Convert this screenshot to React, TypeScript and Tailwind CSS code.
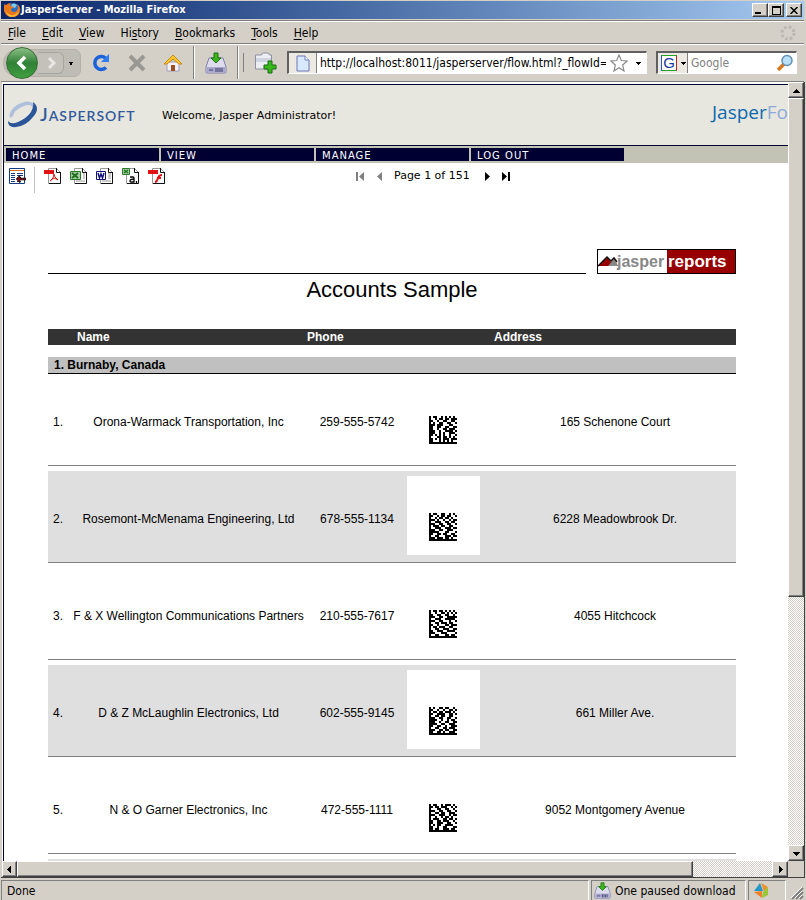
import React from "react";

const UI = "font-['DejaVu_Sans_Condensed','DejaVu_Sans',sans-serif]";
const RAISED = "border border-t-white border-l-white border-r-[#404040] border-b-[#404040] bg-[#d4d0c8] shadow-[inset_-1px_-1px_0_#808080]";
const TRACK = "bg-[repeating-conic-gradient(#fff_0_25%,#d4d0c8_0_50%)] bg-[length:2px_2px]";

const codes = [
  ["10110010101010","10010110110111","11001001100110","10100110011001","11101110001100","11001100110011","11001001101110","11100100111101","11100101001110","11010101001001","10001101101010","11010101110111","11000101010100","11111111111111"],
  ["10110011001010","11001011011001","10010110110100","11101001001011","10011100110110","11100110011001","10111011001100","10011100111011","11100110011100","11111000110001","11001101100110","10011000111011","11101110110100","11111111111111"],
  ["10110110101010","10010011010101","11001100110010","11100110011111","10011100111110","11100110001001","10011011101100","11001000110111","10110111001100","10011001110011","11001110011110","11100011100001","10011000110110","11111111111111"],
  ["10100110110010","11001001001101","10110110111010","11001111001101","10011011001100","11100110011001","11110010010110","11100100110011","11110011001110","11001100100111","10011001101110","11100110110011","11001101001110","11111111111111"],
  ["10110010111010","11011011100101","10001100110010","11100110011001","10011011001110","11100111001011","10010010110100","10111001101101","11001101110010","11001110011001","10101100111100","11001001100011","11011001110110","11111111111111"],
];

const rows = [
  ["Orona-Warmack Transportation, Inc", "259-555-5742", "165 Schenone Court"],
  ["Rosemont-McMenama Engineering, Ltd", "678-555-1134", "6228 Meadowbrook Dr."],
  ["F & X Wellington Communications Partners", "210-555-7617", "4055 Hitchcock"],
  ["D & Z McLaughlin Electronics, Ltd", "602-555-9145", "661 Miller Ave."],
  ["N & O Garner Electronics, Inc", "472-555-1111", "9052 Montgomery Avenue"],
];

function Matrix({ code }: { code: string[] }) {
  return (
    <svg width="28" height="28" viewBox="0 0 14 14" shapeRendering="crispEdges" aria-hidden="true">
      {code.flatMap((line, y) =>
        line.split("").map((c, x) => (c === "1" ? <rect key={`${x}-${y}`} x={x} y={y} width="1" height="1" /> : null)),
      )}
    </svg>
  );
}

function Firefox() {
  return (
    <svg width="18" height="16" viewBox="0 0 18 16" aria-hidden="true">
      <circle cx="10" cy="7" r="6" fill="#2a6fc0" />
      <path d="M8 3q3-3 6 0l-2 3-3-1z" fill="#7cc8f0" />
      <path d="M1 2q1 1 2 1Q5 1 8 1 6 3 8 4l3 1-3 2q0 3 3 3 3 0 4-4l-1-4q4 3 3 7-1 6-8 6-6 0-8-6Q1 5 1 2z" fill="#e8771a" />
      <path d="M2 5q0 6 6 8 5 1 8-5-1 7-7 7-6 0-7-10z" fill="#f8b838" />
    </svg>
  );
}

function Download({ size }: { size: number }) {
  return (
    <svg width={size} height={size} viewBox="0 0 22 22" aria-hidden="true">
      <path d="M4 6h14l3 9v5q0 1-1 1H2q-1 0-1-1v-5z" fill="#dcdcee" stroke="#8080a8" />
      <path d="M2 15h18v5H2z" fill="#a8a8cc" />
      <path d="M11 16v4M13 16v4M15 16v4M17 16v4M4 18h4" stroke="#404070" />
      <path d="M9 1h4v5h3l-5 5-5-5h3z" fill="#3cb819" stroke="#1b7010" />
    </svg>
  );
}

function Tri({ dir, className }: { dir: "up" | "down" | "left" | "right"; className?: string }) {
  const d = { up: "M0 6h7L3.500 2z", down: "M0 2h7L3.500 6z", left: "M5 0v7L1 3.500z", right: "M2 0v7l4-3.500z" }[dir];
  return (
    <svg width="7" height="7" viewBox="0 0 7 7" fill="currentColor" shapeRendering="crispEdges" className={className} aria-hidden="true">
      <path d={d} />
    </svg>
  );
}

function DocIcon({ kind }: { kind: string }) {
  return (
    <svg width="18" height="18" viewBox="0 0 18 18" aria-hidden="true">
      <path d="M4.500 1.500h8l4 4v11h-12z" fill="#fff" stroke="#999" />
      <path d="M16.500 5v11.500H5M12.500 1v4.500h4" fill="none" stroke="#111" />
      {(kind === "pdf" || kind === "swf") && <path d="M0 3h10v4H0z" fill="#e01414" />}
      {kind === "pdf" && <path d="M6 14l3-3 1-4 1 3 3 3-4-2-4 3" fill="none" stroke="#d02020" />}
      {kind === "swf" && <path d="M7 15q2 0 3-4 1-3 4-3M9 11h4" fill="none" stroke="#e01414" strokeWidth="2" />}
      {kind === "xls" && (
        <>
          <path d="M13 7h2M13 9h2M13 11h2M6 14h9" stroke="#999" />
          <path d="M.5 4.500h10v8H.5z" fill="#a8cca4" stroke="#287828" />
          <path d="M2 6l6 5M8 6l-6 5" stroke="#207020" strokeWidth="2" />
        </>
      )}
      {kind === "doc" && (
        <>
          <path d="M12 7h3M12 9h3M12 11h3M6 14h9" stroke="#999" />
          <path d="M.5 4.500h9v8h-9z" fill="#fff" stroke="#14147c" />
          <path d="M2 6l1.500 5L5 7l1.500 4L8 6" fill="none" stroke="#14147c" strokeWidth="1.500" />
        </>
      )}
      {kind === "csv" && (
        <>
          <path d="M.5 1.500h7v6h-7z" fill="#a8cca4" stroke="#287828" />
          <path d="M2 3l4 3M6 3L2 6" stroke="#207020" strokeWidth="1.500" />
          <path d="M8 10h3q1 0 1 1v4H9q-1 0-1-1 0-2 4-2M14.500 14v2" fill="none" stroke="#000" strokeWidth="1.300" />
        </>
      )}
    </svg>
  );
}

function TitleBar() {
  return (
    <header className="mt-px mr-[2px] flex h-[18px] shrink-0 items-center bg-linear-to-r from-[#0a246a] to-[#a6caf0] pl-[2px] text-white">
      <Firefox />
      <h1 className="grow text-[11px] leading-4 font-bold">JasperServer - Mozilla Firefox</h1>
      <div className="flex pr-[2px] text-black">
        <button aria-label="Minimize" className={`flex h-[14px] w-4 items-end justify-center pb-[2px] ${RAISED}`}>
          <span className="mr-1 h-[2px] w-[6px] bg-black" />
        </button>
        <button aria-label="Maximize" className={`flex h-[14px] w-4 items-center justify-center ${RAISED}`}>
          <span className="h-[9px] w-[9px] border border-t-2 border-black" />
        </button>
        <button aria-label="Close" className={`ml-[2px] flex h-[14px] w-4 items-center justify-center ${RAISED}`}>
          <svg width="8" height="7" viewBox="0 0 8 7"><path d="M.5 0l7 7M7.500 0l-7 7" stroke="#000" strokeWidth="1.500" /></svg>
        </button>
      </div>
    </header>
  );
}

function MenuBar() {
  const items = [["", "F", "ile"], ["", "E", "dit"], ["", "V", "iew"], ["Hi", "s", "tory"], ["", "B", "ookmarks"], ["", "T", "ools"], ["", "H", "elp"]];
  return (
    <nav className="mt-[2px] mr-[2px] flex h-[23px] shrink-0 items-center justify-between border-t border-b border-t-white border-b-[#808080] pr-2 pl-[7px] shadow-[0_-1px_0_#808080,0_1px_0_#fff]">
      <div className="flex gap-4">
        {items.map(([a, b, c]) => (
          <button key={b + c} className="text-[12px] leading-4">{a}<span className="underline underline-offset-2">{b}</span>{c}</button>
        ))}
      </div>
      <svg width="16" height="16" viewBox="0 0 16 16" aria-hidden="true">
        <circle cx="8" cy="8" r="6" fill="none" stroke="#bbb8b2" strokeWidth="3" strokeDasharray="2.700 2" />
      </svg>
    </nav>
  );
}

function Divider() {
  return <span className="h-[33px] w-[2px] border-l border-[#808080] bg-white" />;
}

function ToolBar() {
  return (
    <div className="mr-[2px] flex h-[38px] shrink-0 items-center border-b border-[#808080] pr-[7px] pl-[2px]">
      <div className="flex h-7 w-[78px] shrink-0 items-center rounded-l-2xl rounded-r-lg border border-[#b4b0a8] bg-[#bfbcb5]">
        <button aria-label="Back" className="-my-1 ml-[2px] flex size-8 shrink-0 items-center justify-center rounded-full border border-[#3a6a38] bg-linear-to-b from-[#8abf85] via-[#2f8136] to-[#3fa040]">
          <svg width="16" height="18" viewBox="0 0 16 18"><path d="M11 3L5 9l6 6" fill="none" stroke="#fff" strokeWidth="3.500" /></svg>
        </button>
        <button aria-label="Forward" className="flex h-[22px] w-[26px] items-center justify-center rounded-r-md border border-l-0 border-[#a8a59e] bg-[#c4c1ba]">
          <svg width="12" height="14" viewBox="0 0 12 14"><path d="M4 2l5 5-5 5" fill="none" stroke="#e8e6e2" strokeWidth="3" /></svg>
        </button>
        <button aria-label="Recent pages" className="ml-[4px]"><Tri dir="down" className="size-[6px]" /></button>
      </div>
      <div className="ml-[10px] flex shrink-0 items-center gap-4">
        <button aria-label="Reload">
          <svg width="20" height="20" viewBox="0 0 20 20"><path d="M15 14.500A6.500 6.500 0 1 1 14.500 5" fill="none" stroke="#1c62d8" strokeWidth="3.500" /><path d="M18 1v8h-8z" fill="#2d7cf0" /></svg>
        </button>
        <button aria-label="Stop">
          <svg width="20" height="20" viewBox="0 0 20 20"><path d="M3 3l14 14M17 3L3 17" stroke="#9a9892" strokeWidth="4" /></svg>
        </button>
        <button aria-label="Home">
          <svg width="20" height="20" viewBox="0 0 20 20">
            <path d="M4 9h12v9H4z" fill="#f4f0ff" stroke="#a09cb8" />
            <path d="M10 2l9 9H16l-6-5-6 5H1z" fill="#ffc82c" stroke="#c98a14" />
            <path d="M8 12h4v6H8z" fill="#9a5020" />
          </svg>
        </button>
      </div>
      <div className="ml-[10px] flex shrink-0 items-center">
        <Divider />
        <button aria-label="Downloads" className="mx-[10px]"><Download size={22} /></button>
        <Divider />
        <span className="ml-1"><Divider /></span>
        <button aria-label="New tab" className="ml-[10px]">
          <svg width="24" height="22" viewBox="0 0 24 22">
            <path d="M1.500 3h6l1-2h6l1 2h2v14h-16z" fill="#eceef4" stroke="#8c90a0" />
            <path d="M2 6h15v4H2z" fill="#d0d4e0" />
            <path d="M14 9h4v4h4v4h-4v4h-4v-4h-4v-4h4z" fill="#38b81c" stroke="#176a10" />
          </svg>
        </button>
      </div>
      <div className="ml-[9px] flex h-[23px] min-w-0 grow items-center border border-t-2 border-l-2 border-t-[#606060] border-l-[#606060] border-r-white border-b-white bg-white">
        <span className="flex h-full w-7 shrink-0 items-center justify-center border-r border-[#808080] bg-[#ece9e2]">
          <svg width="14" height="17" viewBox="0 0 14 17"><path d="M1 1h8l4 4v11H1z" fill="#d8e8ff" stroke="#6878b8" /><path d="M9 1v4h4" fill="#fff" stroke="#6878b8" /></svg>
        </span>
        <input aria-label="Address" defaultValue="http://localhost:8011/jasperserver/flow.html?_flowId=viewReportFlow" className="ml-[3px] w-0 min-w-0 grow bg-transparent text-[12px] outline-none" />
        <button aria-label="Bookmark" className="ml-1">
          <svg width="18" height="18" viewBox="0 0 18 18"><path d="M9 1l2.300 5.500 5.700.5-4.300 4 1.300 6-5-3.200L4 17l1.300-6L1 7l5.700-.5z" fill="#fff" stroke="#8a8a8a" strokeWidth="1.200" /></svg>
        </button>
        <button aria-label="History list" className="mr-[5px] ml-2"><Tri dir="down" className="size-[5px]" /></button>
      </div>
      <div className="ml-[9px] flex h-[23px] w-[141px] shrink-0 items-center border border-t-2 border-l-2 border-t-[#606060] border-l-[#606060] border-r-white border-b-white bg-white">
        <button aria-label="Search engine" className="flex h-full w-[30px] shrink-0 items-center gap-1 border-r border-[#808080] bg-[#ece9e2] pl-[3px]">
          <span className="flex size-4 shrink-0 items-center justify-center border border-t-[#28a028] border-r-[#c82020] border-b-[#28a028] border-l-[#2858c8] bg-white font-['Liberation_Sans',sans-serif] text-[15px] leading-4 text-[#1838a0]">G</span>
          <Tri dir="down" className="size-[5px]" />
        </button>
        <input aria-label="Search" placeholder="Google" className="ml-[3px] w-0 min-w-0 grow bg-transparent text-[12px] outline-none placeholder:text-[#808080]" />
        <svg width="18" height="18" viewBox="0 0 18 18" className="mr-[2px]" aria-hidden="true"><path d="M2 16l6-6" stroke="#d87820" strokeWidth="3.500" /><circle cx="11" cy="6.500" r="5" fill="#b8e0f8" stroke="#6890b0" strokeWidth="1.500" /></svg>
      </div>
    </div>
  );
}

function PageHeader() {
  return (
    <>
      <div className="flex h-[62px] items-center overflow-hidden border-t border-b border-[#000033] bg-[#e8e7df] pl-1">
        <svg width="30" height="28" viewBox="0 0 30 28" className="shrink-0" aria-hidden="true">
          <path d="M2 17Q0 10 9 4 19-2 25 2 26 5 25 8 24 2 16 5 6 9 5 15z" fill="#b0c0dc" />
          <path d="M25 1q8 6 0 15Q18 25 8 26 0 27 0 20q3 4 10 1 9-4 13-10 3-5 2-10z" fill="#2c5498" />
        </svg>
        <span className="ml-[2px] flex w-[102px] shrink-0 items-baseline font-['Lato',sans-serif] text-[14px] leading-6 font-semibold tracking-[1px] text-[#315a9c]">
          <span className="text-[18px]">J</span>ASPERSOFT
        </span>
        <p className="ml-[20px] grow pt-[3px] text-[11px] whitespace-nowrap">Welcome, Jasper Administrator!</p>
        <p className="w-[76px] shrink-0 pb-[6px] font-['Open_Sans',sans-serif] text-[19px] leading-6 whitespace-nowrap text-[#8eaada]"><span className="text-[#0b68ae]">Jasper</span>Fo</p>
      </div>
      <nav className="flex h-[17px] gap-[2px] bg-[#c3c3b5] px-[2px] pt-[2px] pb-[2px]">
        {["HOME", "VIEW", "MANAGE", "LOG OUT"].map((t) => (
          <a key={t} href="#" className="h-[13px] w-[153px] bg-[#000033] pl-[6px] text-[10px] leading-[15px] tracking-[1px] text-white">{t}</a>
        ))}
      </nav>
    </>
  );
}

function ReportBar() {
  return (
    <div className="flex h-[30px] items-start pt-1 pl-1">
      <button aria-label="Back to list">
        <svg width="18" height="18" viewBox="0 0 18 18">
          <path d="M1.500 1.500h15v15h-15z" fill="#fff" stroke="#173a80" />
          <path d="M2 3.500h14" stroke="#d07020" />
          <path d="M3 6.500h4M9 6.500h6M3 8.500h4M9 8.500h6M3 10.500h4M9 10.500h4M3 12.500h4M3 14.500h4M9 14.500h4" stroke="#173a80" />
          <path d="M8 12l4-4v3h6v2h-6v3z" fill="#781414" stroke="#000" strokeWidth=".5" />
        </svg>
      </button>
      <span className="ml-2 h-[26px] w-px bg-[#c0c0c0]" />
      <div className="ml-[9px] flex gap-2">
        {["pdf", "xls", "doc", "csv", "swf"].map((k) => (
          <button key={k} aria-label={`Export as ${k}`}><DocIcon kind={k} /></button>
        ))}
      </div>
      <div className="ml-[190px] flex h-[18px] items-center text-[11px] whitespace-nowrap">
        <button aria-label="First page" className="text-[#808080]"><svg width="9" height="9" viewBox="0 0 9 9" fill="currentColor"><path d="M0 0h2v9H0zM8 0v9L3 4.500z" /></svg></button>
        <button aria-label="Previous page" className="ml-[11px] text-[#808080]"><svg width="8" height="9" viewBox="0 0 8 9" fill="currentColor"><path d="M6 0v9L1 4.500z" /></svg></button>
        <span className="ml-[10px]">Page 1 of 151</span>
        <button aria-label="Next page" className="ml-[14px]"><svg width="8" height="9" viewBox="0 0 8 9"><path d="M1 0v9l5-4.500z" /></svg></button>
        <button aria-label="Last page" className="ml-[10px]"><svg width="9" height="9" viewBox="0 0 9 9"><path d="M0 0v9l5-4.500zM6 0h2v9H6z" /></svg></button>
      </div>
    </div>
  );
}

function Report() {
  return (
    <main className="pt-[56px] pr-[52px] pl-[44px] font-['Liberation_Sans',Arial,sans-serif]">
      <div className="flex items-end justify-between gap-[11px]">
        <span className="grow border-b border-black" />
        <div className="h-[25px] w-[139px] border border-black bg-white">
          <svg width="137" height="23" viewBox="0 0 137 23" role="img" aria-label="jasperreports">
            <path d="M69 0h68v23H69z" fill="#980000" />
            <path d="M0 16l9-9 4 5 3-3 4 7z" fill="#980000" />
            <path d="M10 16l6-7 4 7z" fill="#888" />
            <path d="M0 16l9-9 4 4 3-3 3 4" fill="none" stroke="#111" strokeWidth="1.500" />
            <text x="19" y="17" fill="#888" fontSize="16" fontWeight="bold" fontFamily="Liberation Sans, Arial, sans-serif">jasper</text>
            <text x="70" y="17" fill="#fff" fontSize="17" fontWeight="bold" fontFamily="Liberation Sans, Arial, sans-serif">reports</text>
          </svg>
        </div>
      </div>
      <h2 className="pt-[2px] text-center text-[22px] leading-7">Accounts Sample</h2>
      <table className="mt-[25px] w-full table-fixed border-separate border-spacing-0 text-[12px] leading-4">
        <colgroup>
          <col className="w-[22px]" />
          <col className="w-[237px]" />
          <col className="w-[100px]" />
          <col className="w-[73px]" />
          <col className="w-[14px]" />
          <col />
        </colgroup>
        <thead>
          <tr className="h-4 bg-[#333] text-left text-white">
            <th className="p-0" />
            <th className="p-0 pl-[7px]">Name</th>
            <th className="p-0">Phone</th>
            <th className="p-0" />
            <th className="p-0" />
            <th className="p-0">Address</th>
          </tr>
        </thead>
        <tbody>
          <tr className="h-3"><td colSpan={6} className="p-0" /></tr>
          <tr className="h-[17px] bg-[#c0c0c0]">
            <th colSpan={6} className="border-b border-black p-0 pl-[6px] text-left">1. Burnaby, Canada</th>
          </tr>
          {rows.map(([name, phone, address], i) => (
            <React.Fragment key={name}>
              <tr className={`h-[92px] align-top *:border-b *:border-[#808080] ${i % 2 ? "bg-[#dfdfdf]" : ""}`}>
                <td className="p-0 pt-10 pl-[5px]">{i + 1}.</td>
                <td className="p-0 pt-10 text-center whitespace-nowrap">{name}</td>
                <td className="p-0 pt-10 text-center">{phone}</td>
                <td className="p-0 pt-[5px]"><div className="h-[79px] bg-white pt-[37px] pl-[22px]"><Matrix code={codes[i]} /></div></td>
                <td className="p-0" />
                <td className="p-0 pt-10 text-center">{address}</td>
              </tr>
              <tr className="h-[5px]"><td colSpan={6} className="p-0" /></tr>
            </React.Fragment>
          ))}
          <tr className="h-[92px] bg-[#dfdfdf]"><td colSpan={6} className="p-0" /></tr>
        </tbody>
      </table>
    </main>
  );
}

function StatusBar() {
  return (
    <footer className="mt-[2px] flex h-5 shrink-0 gap-[2px] text-[12px] leading-4">
      <p className="grow border-t border-r border-l border-[#808080] border-r-white pt-[2px] pl-[5px]">Done</p>
      <div className="flex w-[155px] items-start gap-1 border-t border-r border-l border-[#808080] border-r-white pt-px pl-[2px] whitespace-nowrap"><Download size={17} /><span className="pt-px">One paused download</span></div>
      <div className="w-[38px] border-t border-r border-l border-[#808080] border-r-white pt-px pl-1">
        <svg width="17" height="17" viewBox="0 0 17 17" aria-hidden="true"><path d="M1 9l6-8 3 8z" fill="#2498c8" /><path d="M8 1l7 4-4 5z" fill="#f09030" /><path d="M15 5v8l-6 3 1-6z" fill="#98c838" /><path d="M1 10l8-1v7z" fill="#f08028" /></svg>
      </div>
      <svg width="18" height="20" viewBox="0 0 18 20" aria-hidden="true"><path d="M4 19L15 8M8 19l7-7M12 19l3-3" stroke="#808080" strokeWidth="2" /><path d="M3 18L14 7M7 18l7-7M11 18l3-3" stroke="#fff" /></svg>
    </footer>
  );
}

export default function App() {
  return (
    <div className={`flex h-screen flex-col overflow-hidden bg-[#d4d0c8] pl-px text-black ${UI}`}>
      <TitleBar />
      <MenuBar />
      <ToolBar />
      <div className="mr-px flex min-h-0 grow border-r border-b border-[#404040] pl-px">
        <div className="flex min-w-0 grow flex-col">
          <div className="min-h-0 grow overflow-hidden bg-white pt-[2px] pl-px font-['DejaVu_Sans',Verdana,sans-serif]">
            <div className="min-h-full border-l border-[#000033]">
              <PageHeader />
              <ReportBar />
              <Report />
            </div>
          </div>
          <div className={`flex h-4 shrink-0 ${TRACK}`}>
            <button aria-label="Scroll left" className={`flex w-[15px] items-center justify-center ${RAISED}`}><Tri dir="left" /></button>
            <div className={`w-[86%] ${RAISED}`} />
            <button aria-label="Scroll right" className={`ml-auto flex w-4 items-center justify-center ${RAISED}`}><Tri dir="right" /></button>
          </div>
        </div>
        <div className="flex w-4 shrink-0 flex-col">
          <div className={`flex min-h-0 grow flex-col ${TRACK}`}>
            <button aria-label="Scroll up" className={`flex h-4 shrink-0 items-center justify-center ${RAISED}`}><Tri dir="up" /></button>
            <div className={`h-[64%] ${RAISED}`} />
            <button aria-label="Scroll down" className={`mt-auto flex h-4 shrink-0 items-center justify-center ${RAISED}`}><Tri dir="down" /></button>
          </div>
          <span className="h-4 shrink-0" />
        </div>
      </div>
      <StatusBar />
    </div>
  );
}
